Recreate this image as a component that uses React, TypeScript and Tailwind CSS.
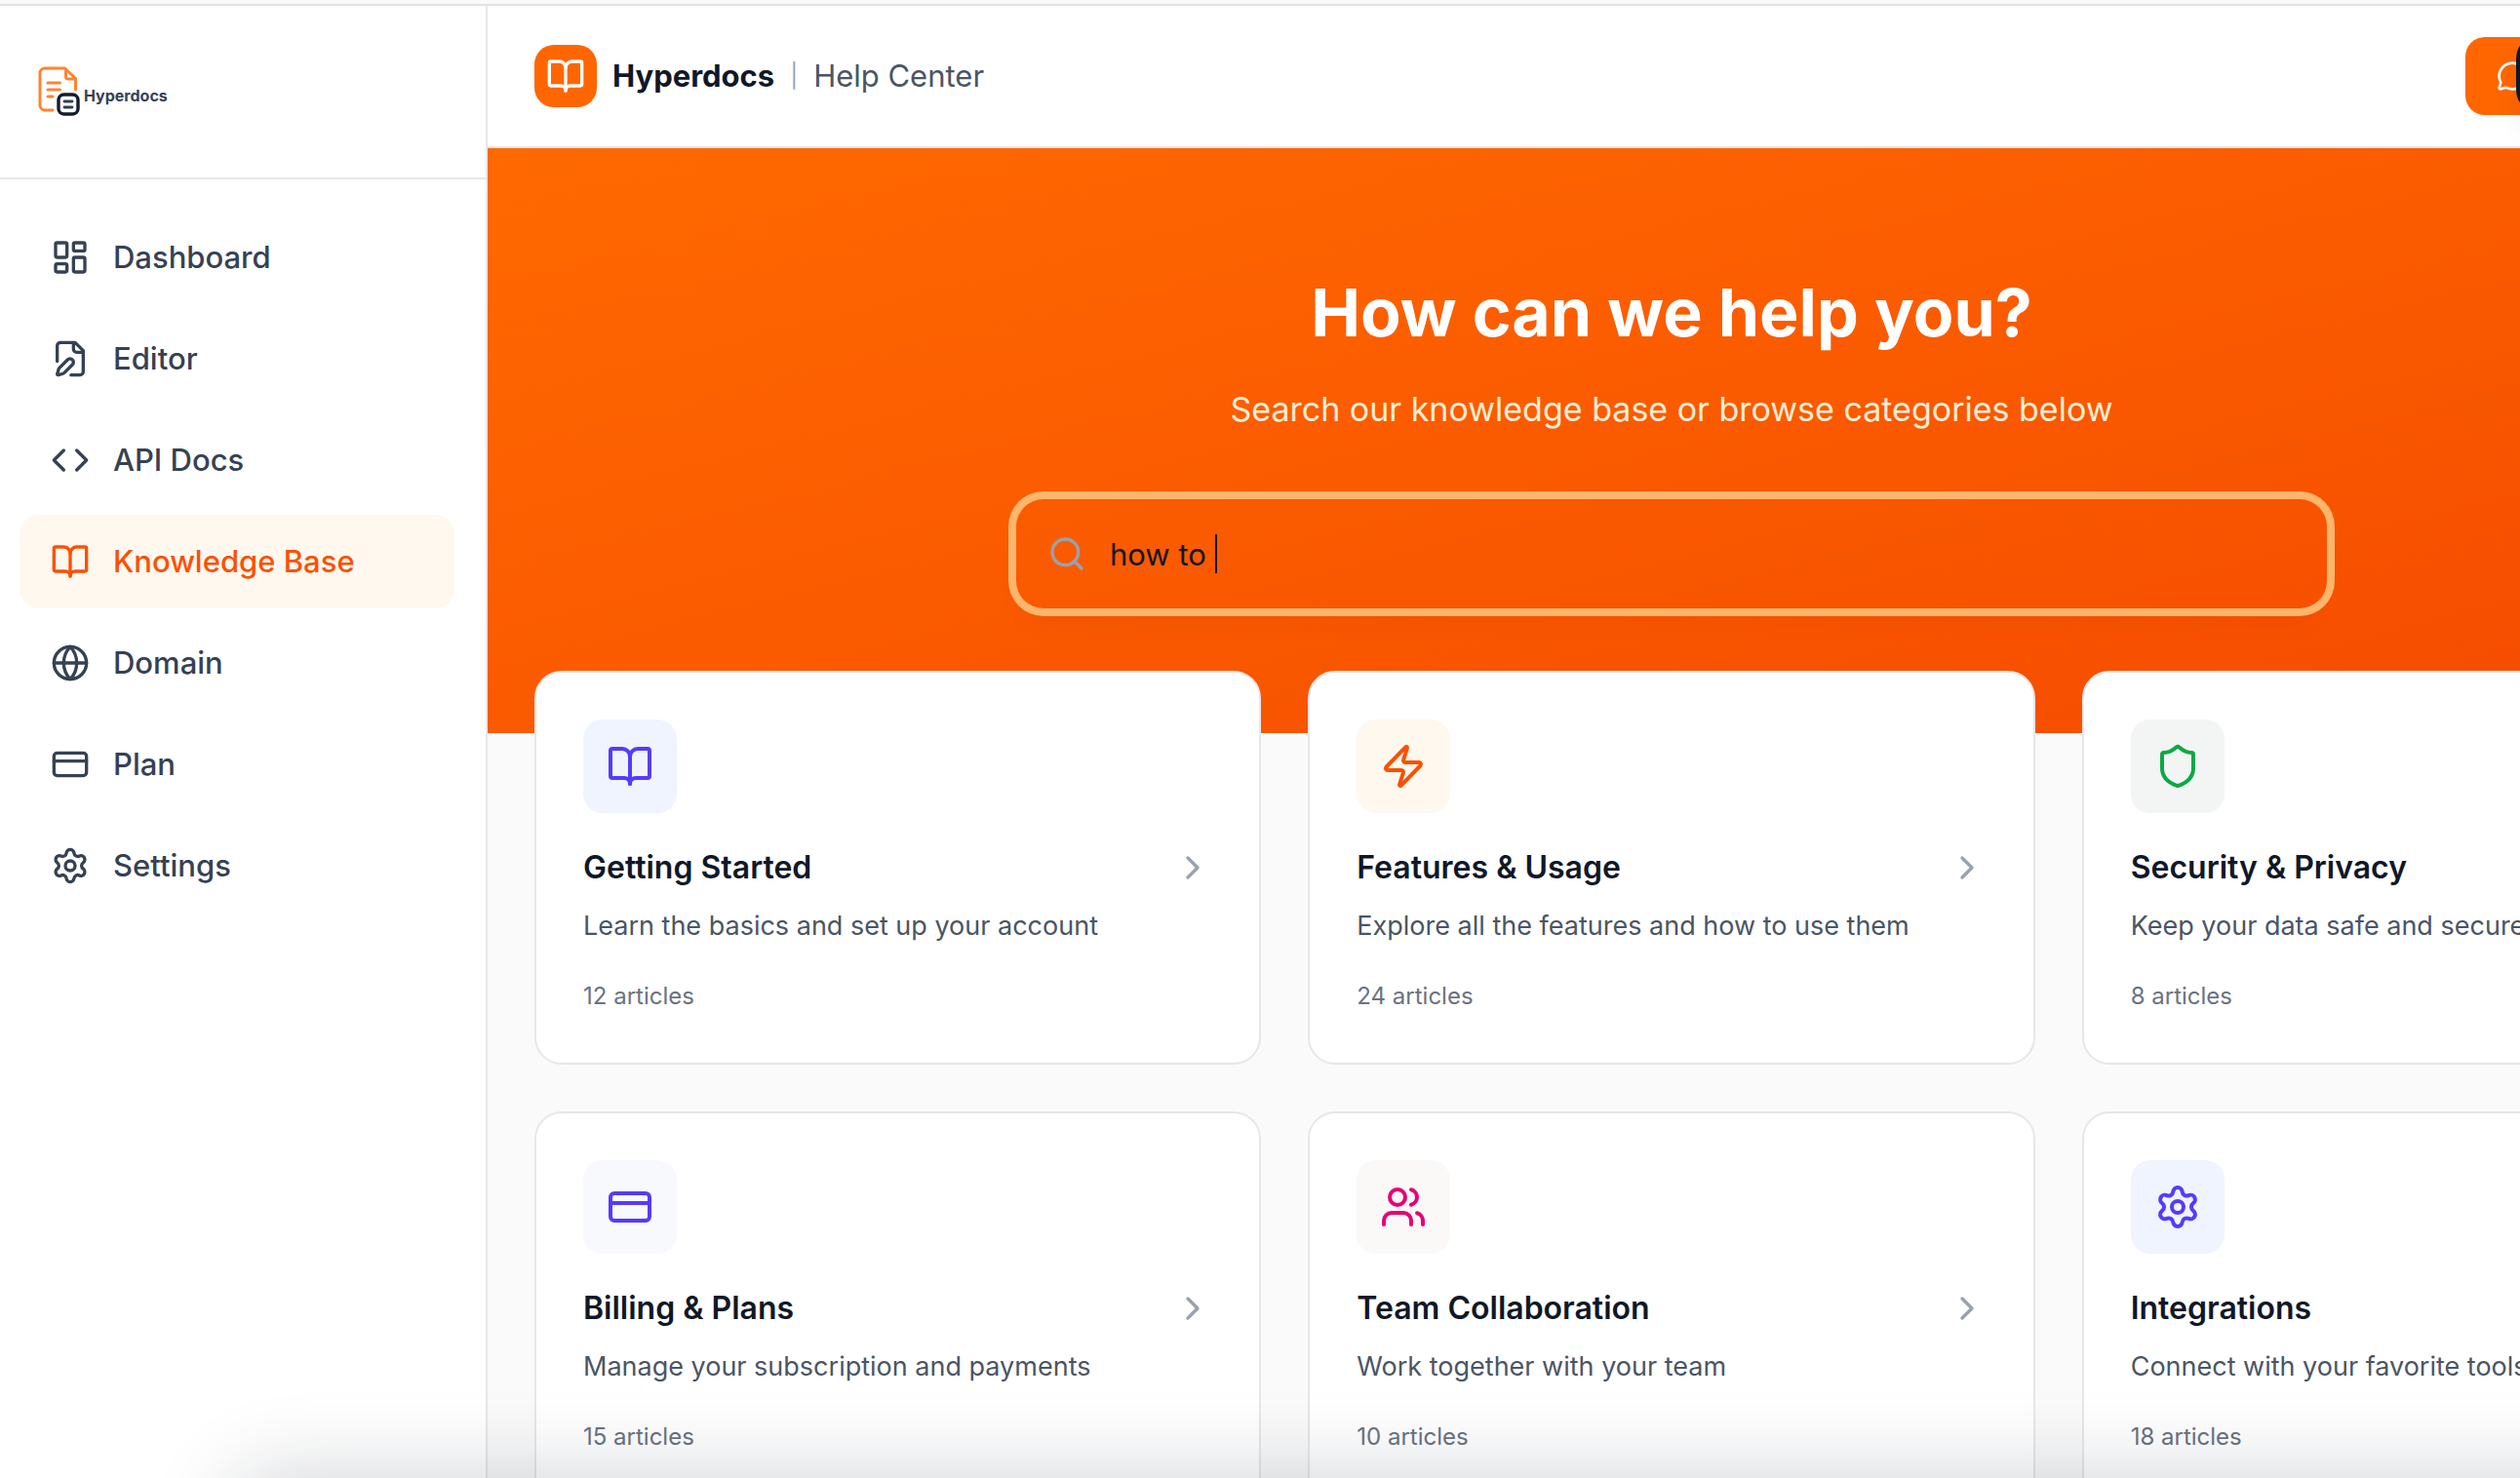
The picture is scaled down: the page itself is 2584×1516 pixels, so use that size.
import { useState } from "react";
import {
  BookOpen,
  ChevronRight,
  Code,
  CreditCard,
  Globe,
  LayoutDashboard,
  MessageCircle,
  Search,
  Settings,
  Shield,
  Users,
  Zap,
} from "lucide-react";
import type { ComponentType } from "react";

type IconType = ComponentType<{ size?: number | string; className?: string }>;

interface NavItem {
  label: string;
  icon: IconType;
}

interface Category {
  title: string;
  description: string;
  articles: number;
  icon: IconType;
  tile: string;
}

function EditorIcon({ size = 24 }: { size?: number | string }) {
  return (
    <svg
      width={size}
      height={size}
      viewBox="0 0 24 24"
      fill="none"
      stroke="currentColor"
      strokeWidth="2"
      strokeLinecap="round"
      strokeLinejoin="round"
    >
      <path d="M12.5 22H18a2 2 0 0 0 2-2V7l-5-5H6a2 2 0 0 0-2 2v9.5" />
      <path d="M14 2v4a2 2 0 0 0 2 2h4" />
      <path d="M13.378 15.626a1 1 0 1 0-3.004-3.004l-5.01 5.012a2 2 0 0 0-.506.854l-.837 2.87a.5.5 0 0 0 .62.62l2.87-.837a2 2 0 0 0 .854-.506z" />
    </svg>
  );
}

const NAV_ITEMS: NavItem[] = [
  { label: "Dashboard", icon: LayoutDashboard },
  { label: "Editor", icon: EditorIcon },
  { label: "API Docs", icon: Code },
  { label: "Knowledge Base", icon: BookOpen },
  { label: "Domain", icon: Globe },
  { label: "Plan", icon: CreditCard },
  { label: "Settings", icon: Settings },
];

const CATEGORIES: Category[] = [
  {
    title: "Getting Started",
    description: "Learn the basics and set up your account",
    articles: 12,
    icon: BookOpen,
    tile: "bg-[#eff4ff] text-[#563bfb]",
  },
  {
    title: "Features & Usage",
    description: "Explore all the features and how to use them",
    articles: 24,
    icon: Zap,
    tile: "bg-[#fff8ef] text-[#fa5000]",
  },
  {
    title: "Security & Privacy",
    description: "Keep your data safe and secure",
    articles: 8,
    icon: Shield,
    tile: "bg-[#f3f5f4] text-[#0aa944]",
  },
  {
    title: "Billing & Plans",
    description: "Manage your subscription and payments",
    articles: 15,
    icon: CreditCard,
    tile: "bg-[#f8f9fd] text-[#563bfb]",
  },
  {
    title: "Team Collaboration",
    description: "Work together with your team",
    articles: 10,
    icon: Users,
    tile: "bg-[#faf9f8] text-[#e60079]",
  },
  {
    title: "Integrations",
    description: "Connect with your favorite tools",
    articles: 18,
    icon: Settings,
    tile: "bg-[#eff4ff] text-[#563bfb]",
  },
];

function Logo() {
  return (
    <a href="#" className="flex items-center gap-1">
      <svg width="44" height="52" viewBox="0 2 44 52" fill="none" strokeLinecap="round" strokeLinejoin="round">
        <g stroke="#ff8430" strokeWidth="3">
          <path d="M16 47H8a5 5 0 0 1-5-5V9a5 5 0 0 1 5-5h20.500L39.500 14.500V26" />
          <path d="M29.500 5v7.500a2.500 2.500 0 0 0 2.500 2.500h6.500" />
          <path d="M11 19h12.500M11 26h12.500M11 33h5" />
        </g>
        <rect x="22" y="31" width="20" height="20" rx="5.500" fill="#fff" stroke="#141c2e" strokeWidth="3.400" />
        <path d="M28 38h8M28 44h8" stroke="#354055" strokeWidth="2.800" />
      </svg>
      <span className="pt-2 text-[16px] leading-6 font-bold text-[#364153]">Hyperdocs</span>
    </a>
  );
}

function Sidebar() {
  const [active, setActive] = useState("Knowledge Base");

  return (
    <aside className="w-[500px] shrink-0 border-r-2 border-[#e7e7e8] bg-white">
      <div className="flex h-[178px] items-center border-b-2 border-[#e7e7e8] px-[38px]">
        <Logo />
      </div>
      <nav className="flex flex-col gap-2 py-8 pr-8 pl-5">
        {NAV_ITEMS.map(({ label, icon: Icon }) => (
          <button
            key={label}
            type="button"
            onClick={() => setActive(label)}
            className={`flex h-24 items-center gap-6 rounded-[20px] px-8 text-[31px] font-medium ${
              active === label ? "bg-[#fff8ef] text-[#fc5000]" : "text-[#364153]"
            }`}
          >
            <Icon size={40} />
            {label}
          </button>
        ))}
      </nav>
    </aside>
  );
}

function TopBar() {
  return (
    <header className="flex h-[146px] items-center justify-between border-b-2 border-[#e5e7eb] bg-white px-12">
      <div className="flex items-center gap-4 text-[31px] leading-12">
        <div className="flex size-16 items-center justify-center rounded-[20px] bg-[#ff6600] text-white">
          <BookOpen size={40} />
        </div>
        <span className="font-bold text-[#101828]">Hyperdocs</span>
        <span className="text-[24px] text-[#99a1af]">|</span>
        <span className="text-[#4a5565]">Help Center</span>
      </div>
      <button
        type="button"
        aria-label="Contact support"
        className="flex h-20 w-[352px] items-center rounded-[20px] bg-[#ff6600] px-8 text-white"
      >
        <MessageCircle size={32} />
      </button>
    </header>
  );
}

function Hero() {
  const [query, setQuery] = useState("how to ");

  return (
    <section className="flex flex-col items-center bg-linear-to-br from-[#ff6900] to-[#f54900] px-12 py-32">
      <h1 className="text-[68px] leading-20 font-bold text-white">How can we help you?</h1>
      <p className="mt-8 text-[34px] leading-14 text-[#ffedd4]">
        Search our knowledge base or browse categories below
      </p>
      <div className="relative mt-16 w-full max-w-[1344px] text-[31px] text-[#101828]">
        <Search size={40} className="absolute top-9 left-8 text-[#99a1af]" />
        <input
          type="text"
          aria-label="Search the knowledge base"
          value={query}
          onChange={(e) => setQuery(e.target.value)}
          className="h-28 w-full rounded-[28px] pr-12 pl-24 caret-transparent shadow-[0_20px_30px_-6px_rgba(0,0,0,0.04)] ring-8 ring-[#ffb56b] outline-none"
        />
        {/* caret sits right after the typed text */}
        <div aria-hidden="true" className="pointer-events-none absolute inset-y-0 left-24 flex items-center">
          <span className="invisible whitespace-pre">{query}</span>
          <span className="h-10 w-[2px] bg-[#101828]" />
        </div>
      </div>
    </section>
  );
}

function CategoryCard({ title, description, articles, icon: Icon, tile }: Category) {
  return (
    <a href="#" className="block rounded-[28px] border-2 border-[#e7e7e8] bg-white p-12">
      <div className={`flex size-24 items-center justify-center rounded-[20px] ${tile}`}>
        <Icon size={48} />
      </div>
      <div className="mt-8 flex items-center justify-between">
        <h3 className="text-[32px] leading-12 font-semibold text-[#101828]">{title}</h3>
        <ChevronRight size={40} className="text-[#99a1af]" />
      </div>
      <p className="mt-4 text-[27px] leading-10 text-[#4a5565]">{description}</p>
      <p className="mt-8 text-[24px] leading-10 text-[#6a7282]">{articles} articles</p>
    </a>
  );
}

export default function App() {
  return (
    <div className="relative flex h-screen flex-col overflow-hidden bg-[#fafafa] font-[Inter,sans-serif]">
      <div className="h-[6px] shrink-0 border-b-2 border-[#e2e2e3]" />
      <div className="flex flex-1">
        <Sidebar />
        {/* content is wider than the window and runs off its right edge */}
        <main className="min-w-[2428px] flex-1">
          <TopBar />
          <Hero />
          <div className="-mt-16 grid grid-cols-3 gap-12 px-12">
            {CATEGORIES.map((category) => (
              <CategoryCard key={category.title} {...category} />
            ))}
          </div>
        </main>
      </div>

      {/* floating panels just past the right and bottom edges */}
      <div className="absolute top-9 left-[calc(100%-4px)] h-20 w-40 rounded-3xl bg-[#101828] shadow-[0_20px_30px_-6px_rgba(0,0,0,0.1)]" />
      <div className="absolute top-full -right-52 left-60 h-40 rounded-[40px] shadow-[0_0_90px_rgba(16,24,40,0.2)]" />
    </div>
  );
}
